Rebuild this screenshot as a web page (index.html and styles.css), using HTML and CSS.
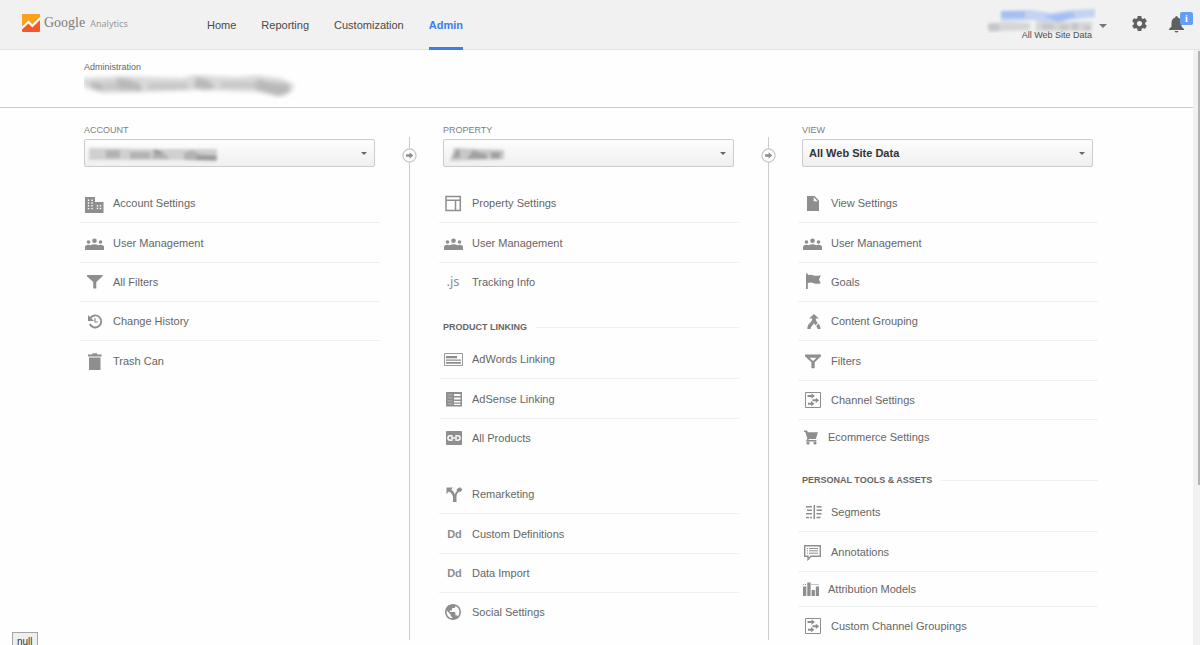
FILE: index.html
```html
<!DOCTYPE html>
<html lang="en">
<head>
    <meta charset="UTF-8">
    <meta name="viewport" content="width=device-width, initial-scale=1.0">
    <title>Google Analytics - Admin</title>
    <link rel="stylesheet" href="styles.css">
</head>
<body>
    <!-- Shared icons and filters -->
    <svg class="defs" width="0" height="0" aria-hidden="true">
        <defs>
            <filter id="soft" x="-10%" y="-40%" width="120%" height="180%">
                <feGaussianBlur stdDeviation="2"/>
            </filter>
            <filter id="softer" x="-10%" y="-40%" width="120%" height="180%">
                <feGaussianBlur stdDeviation="1.500"/>
            </filter>
            <symbol id="users" viewBox="0 0 20 20">
                <circle cx="4.500" cy="9" r="1.800"/><circle cx="10.500" cy="7.800" r="2.300"/><circle cx="16.500" cy="9" r="1.800"/>
                <path d="M1 17v-3q0-2 3.500-2.200q1.300 0 2.300.4q1.500-1 3.700-1t3.700 1q1-.4 2.300-.4q3.500.2 3.500 2.200v3z"/>
            </symbol>
            <symbol id="channels" viewBox="0 0 20 20">
                <path fill="none" stroke="#8e8e8e" d="M3.500 2.500h15v15h-15z"/>
                <path d="M5.500 5h4V3.300l3.400 2.700-3.400 2.700V7h-4zM10.500 9.300h3.300V7.700l3.400 2.600-3.400 2.600v-1.600h-3.300zM6 12.700h3v-1.600l3.400 2.600L9 16.300v-1.600H6z"/>
            </symbol>
        </defs>
    </svg>

    <header class="topbar">
        <a class="logo" href="#">
            <svg width="18" height="18" viewBox="0 0 18 18" aria-hidden="true">
                <rect width="18" height="18" rx="1" fill="#f4592b"/>
                <path fill="#fba11b" d="M1 0h16q1 0 1 1v3.500l-7.500 7-3-3L0 15V1q0-1 1-1z"/>
                <path fill="none" stroke="#fff" stroke-width="2.200" d="M-.5 14.500l7-6.500 3.800 4L18.500 4"/>
            </svg>
            <span class="logo-google">Google</span>
            <span class="logo-product">Analytics</span>
        </a>
        <nav class="tabs">
            <a href="#">Home</a>
            <a href="#">Reporting</a>
            <a href="#">Customization</a>
            <a class="active" href="#">Admin</a>
        </nav>
        <button class="profile" type="button">
            <svg class="profile-smudge" width="112" height="28" viewBox="0 0 112 28" aria-hidden="true">
                <g filter="url(#softer)">
                    <path fill="#c3d3f3" d="M17 6l30-1 20 3 20-3 24-1v8l-26 3-16 4-20-4-32 1z"/>
                    <path fill="#a5bff1" d="M17 6h24v7H17zM60 11l28-4 4 5-18 5z"/>
                    <path fill="#d6d6d6" d="M4 18l22-1 20 1v7l-28 1-12 2zM52 17h56v9H52z"/>
                    <path fill="#c6c6c6" d="M4 19h11v6H4zM58 19h12v5H58zM76 20h8v5h-8zM88 18h6v7h-6zM100 21h6v4h-6z"/>
                </g>
            </svg>
            <span>All Web Site Data</span>
        </button>
        <button class="icon-button" type="button" aria-label="Settings">
            <svg width="15" height="15" viewBox="2 2 20 20" aria-hidden="true">
                <path d="M19.430 12.980c.04-.32.07-.64.07-.98s-.03-.66-.07-.98l2.110-1.650c.19-.15.24-.42.12-.64l-2-3.460c-.12-.22-.39-.3-.61-.22l-2.490 1c-.52-.4-1.080-.73-1.690-.98l-.38-2.650C14.460 2.180 14.250 2 14 2h-4c-.25 0-.46.18-.49.42l-.38 2.650c-.61.25-1.170.59-1.690.98l-2.490-1c-.23-.09-.49 0-.61.22l-2 3.460c-.13.22-.07.49.12.64l2.110 1.650c-.04.32-.07.65-.07.98s.03.66.07.98l-2.110 1.650c-.19.15-.24.42-.12.64l2 3.460c.12.22.39.3.61.22l2.490-1c.52.4 1.080.73 1.690.98l.38 2.650c.03.24.24.42.49.42h4c.25 0 .46-.18.49-.42l.38-2.650c.61-.25 1.170-.59 1.690-.98l2.490 1c.23.09.49 0 .61-.22l2-3.460c.12-.22.07-.49-.12-.64l-2.110-1.650zM12 15.500c-1.930 0-3.500-1.570-3.500-3.500s1.570-3.500 3.500-3.500 3.500 1.570 3.500 3.500-1.570 3.500-3.500 3.500z"/>
            </svg>
        </button>
        <button class="icon-button bell" type="button" aria-label="Notifications">
            <svg width="15" height="18" viewBox="0 0 15 18" aria-hidden="true">
                <path d="M7.500 1q1.300 0 1.300 1.500Q12.500 3.500 12.500 8v3.500L15 14v1H0v-1l2.500-2.500V8q0-4.500 3.700-5.500Q6.200 1 7.500 1zM5.500 16h4q-.4 1.600-2 1.600t-2-1.600z"/>
            </svg>
            <span class="badge">i</span>
        </button>
    </header>

    <div class="page">
        <div class="content">
            <div class="page-title">
                <h1>Administration</h1>
                <svg width="220" height="26" viewBox="0 0 220 26" aria-hidden="true">
                    <g filter="url(#soft)">
                        <path fill="#dadada" d="M-2 5l40-2 60 2 12-3 44 2 18-2 24 3 14 6-1 7-12 6-24-5-60-2-50 2-44 1-20-6z"/>
                        <path fill="#b9b9b9" d="M6 9l12 1 2 8-12-2zM33 5l10 1 14 5 1 7-24-1-2-6zM112 4l12 3 8 7-10 3-12-2zM173 6l12 3 20 2v9l-12 3-22-7z"/>
                        <path fill="#c8c8c8" d="M20 9h14v8H20zM64 10h40v7H64zM136 9h36v6h-36z"/>
                    </g>
                </svg>
            </div>

            <main class="columns">
                <section class="column">
                    <label for="account">ACCOUNT</label>
                    <div class="picker">
                        <select id="account"><option></option></select>
                        <svg class="picker-smudge" width="136" height="20" viewBox="0 0 136 20" aria-hidden="true">
                            <g filter="url(#softer)">
                                <path fill="#d0d0d0" d="M3 4l60 1 68 0v11l-54 0-74 0z"/>
                                <path fill="#b2b2b2" d="M20 6h14v8H20zM44 8h20v7H44zM68 5l10 4 6 6H66zM98 9l8-3 8 4 17 1v6l-33-1z"/>
                                <path fill="#9a9a9a" d="M68 5l9 3-3 3-6-2zM110 12h20v4h-20z"/>
                            </g>
                        </svg>
                    </div>
                    <ul class="menu">
                        <li><a href="#">
                            <svg class="icon" viewBox="0 0 20 20" aria-hidden="true">
                                <path d="M1 4h10v5h8.500v11H1z"/>
                                <path stroke="#fefefe" stroke-width="1.400" stroke-dasharray="1.400 1.400" d="M4.500 6.500v11M8 6.500v11M13.500 12v5.600M16.500 12v5.600"/>
                            </svg>
                            Account Settings</a></li>
                        <li><a href="#"><svg class="icon" aria-hidden="true"><use href="#users"/></svg>User Management</a></li>
                        <li><a href="#">
                            <svg class="icon" viewBox="0 0 20 20" aria-hidden="true"><path d="M3 3h15.500v1.300L12.300 10v6.500H9.200V10L3 4.300z"/></svg>
                            All Filters</a></li>
                        <li><a href="#">
                            <svg class="icon" viewBox="0 0 20 20" aria-hidden="true">
                                <path fill="none" stroke="#8e8e8e" stroke-width="1.800" d="M6.200 7.200a6 6 0 1 1-.4 5.800"/>
                                <path d="M4 4v6h6z"/>
                                <path fill="none" stroke="#8e8e8e" stroke-width="1.200" d="M11 7v4h3"/>
                            </svg>
                            Change History</a></li>
                        <li><a href="#">
                            <svg class="icon" viewBox="0 0 20 20" aria-hidden="true"><path d="M4 3.500h4l.8-1.200h4l.8 1.200h4v2H4zM5 6.500h11.500V19H5z"/></svg>
                            Trash Can</a></li>
                    </ul>
                </section>

                <div class="divider">
                    <svg width="15" height="15" viewBox="0 0 16 16" aria-hidden="true">
                        <circle cx="8" cy="8" r="7" fill="#fefefe" stroke="#c6c6c6" stroke-width="1.300"/>
                        <path fill="#8e8e8e" d="M4.300 6.600h3.800V4.600L12 8l-3.900 3.400v-2H4.300z"/>
                    </svg>
                </div>

                <section class="column">
                    <label for="property">PROPERTY</label>
                    <div class="picker">
                        <select id="property"><option></option></select>
                        <svg class="picker-smudge" width="64" height="20" viewBox="0 0 64 20" aria-hidden="true">
                            <g filter="url(#softer)">
                                <path fill="#c8c8c8" d="M9 4l24 1 26 1v9l-30 1-24 1 2-6z"/>
                                <path fill="#a2a2a2" d="M11 6h4l0 8H8zM28 6l8 3 6 1v5H22zM46 8h9v7h-9z"/>
                            </g>
                        </svg>
                    </div>
                    <ul class="menu">
                        <li><a href="#">
                            <svg class="icon" viewBox="0 0 20 20" aria-hidden="true"><path fill="none" stroke="#8e8e8e" stroke-width="1.500" d="M3 3.500h14.300v14H3zM3 7.300h14.300M12.500 7.300v10.200"/></svg>
                            Property Settings</a></li>
                        <li><a href="#"><svg class="icon" aria-hidden="true"><use href="#users"/></svg>User Management</a></li>
                        <li><a href="#"><span class="icon icon-js" aria-hidden="true">.js</span>Tracking Info</a></li>
                    </ul>
                    <h2>PRODUCT LINKING</h2>
                    <ul class="menu">
                        <li><a href="#">
                            <svg class="icon" viewBox="0 0 20 20" aria-hidden="true">
                                <path fill="none" stroke="#9a9a9a" d="M1.500 4.500h18v12h-18z"/>
                                <path d="M3 7h11v2.200H3zM3 10.500h15v1.200H3zM3 13h15v1.700H3z"/>
                            </svg>
                            AdWords Linking</a></li>
                        <li><a href="#">
                            <svg class="icon" viewBox="0 0 20 20" aria-hidden="true">
                                <path d="M3 3h16v14.500H3z"/>
                                <path fill="#fefefe" d="M11 5h6.500v2H11zM11 8.500h6.500v2H11zM11 12h6.500v1.500H11zM11 14.700h6.500V16H11z"/>
                                <path fill="#c4c4c4" d="M4.500 5.500h4.800v.7H4.500zM4.500 8.500h4.800v.7H4.500zM4.500 11.500h4.800v.7H4.500zM4.500 14.500h4.800v.7H4.500z"/>
                            </svg>
                            AdSense Linking</a></li>
                        <li><a href="#">
                            <svg class="icon" viewBox="0 0 20 20" aria-hidden="true">
                                <rect x="3" y="3" width="16" height="14" rx="1"/>
                                <path fill="none" stroke="#fefefe" stroke-width="1.500" d="M9.800 8.400Q9 7.800 7.500 7.800q-2.600 0-2.600 2.200t2.600 2.200q1.500 0 2.300-.6M12.200 8.400q.8-.6 2.300-.6 2.600 0 2.600 2.200t-2.600 2.200q-1.500 0-2.300-.6M8 10h6"/>
                            </svg>
                            All Products</a></li>
                    </ul>
                    <ul class="menu menu-spaced">
                        <li><a href="#">
                            <svg class="icon" viewBox="0 0 20 20" aria-hidden="true">
                                <path d="M3.500 3.500H10L8.300 5.400q3 2.300 3.500 5 .5-2 2.400-3.700l-.9-.9L16 3.500h1.500l2 2.200-2.500 2.500-1-.7q-2.500 2-2.500 5V18H10v-4.500q0-3.500-4-6L3.500 10z"/>
                            </svg>
                            Remarketing</a></li>
                        <li><a href="#"><span class="icon icon-dd" aria-hidden="true">Dd</span>Custom Definitions</a></li>
                        <li><a href="#"><span class="icon icon-dd" aria-hidden="true">Dd</span>Data Import</a></li>
                        <li><a href="#">
                            <svg class="icon" viewBox="0 0 25 25" aria-hidden="true"><path transform="translate(.5 .5)" d="M12 2C6.480 2 2 6.480 2 12s4.480 10 10 10 10-4.480 10-10S17.520 2 12 2zm-1 17.930c-3.950-.49-7-3.850-7-7.930 0-.62.08-1.210.21-1.790L9 15v1c0 1.100.9 2 2 2v1.930zm6.900-2.540c-.26-.81-1-1.390-1.900-1.390h-1v-3c0-.55-.45-1-1-1H8v-2h2c.55 0 1-.45 1-1V7h2c1.100 0 2-.9 2-2v-.41c2.930 1.190 5 4.060 5 7.410 0 2.080-.8 3.970-2.100 5.390z"/></svg>
                            Social Settings</a></li>
                    </ul>
                </section>

                <div class="divider">
                    <svg width="15" height="15" viewBox="0 0 16 16" aria-hidden="true">
                        <circle cx="8" cy="8" r="7" fill="#fefefe" stroke="#c6c6c6" stroke-width="1.300"/>
                        <path fill="#8e8e8e" d="M4.300 6.600h3.800V4.600L12 8l-3.900 3.400v-2H4.300z"/>
                    </svg>
                </div>

                <section class="column">
                    <label for="view">VIEW</label>
                    <div class="picker">
                        <select id="view"><option>All Web Site Data</option></select>
                    </div>
                    <ul class="menu">
                        <li><a href="#">
                            <svg class="icon" viewBox="0 0 20 20" aria-hidden="true">
                                <path d="M5 3h7.500L17 7.500V18H5z"/>
                                <path fill="#fefefe" d="M11.700 4.300v4h4z"/>
                            </svg>
                            View Settings</a></li>
                        <li><a href="#"><svg class="icon" aria-hidden="true"><use href="#users"/></svg>User Management</a></li>
                        <li><a href="#">
                            <svg class="icon" viewBox="0 0 20 20" aria-hidden="true"><path d="M4 1.500h1.800V3q3-.8 6 .5 3 .8 7-.3l-1.800 4.500 1.800 3.500q-4 1-7 0-3-1.200-6-.2v6H4z"/></svg>
                            Goals</a></li>
                        <li><a href="#">
                            <svg class="icon" viewBox="0 0 20 20" aria-hidden="true">
                                <path d="M12 3l4.800 4.500h-3.200q.2 2.500 2.200 4.500l-2.300 2.300q-1-1-1.500-2.200-.5 1.200-1.500 2.200-2 1.500-2 3.700H5.300q0-4.200 2.700-6 2.200-2 2.400-4.500H7.200zM16.500 12.800q2 2 2.200 5.200h-3.200q-.2-1.700-1.300-3z"/>
                            </svg>
                            Content Grouping</a></li>
                        <li><a href="#">
                            <svg class="icon" viewBox="0 0 20 20" aria-hidden="true"><path fill-rule="evenodd" d="M3 3.500h16v1.800l-6.300 6v6H9.400v-6L3 5.300zM7.500 6.700l3.500 3.200 3.500-3.200z"/></svg>
                            Filters</a></li>
                        <li><a href="#"><svg class="icon" aria-hidden="true"><use href="#channels"/></svg>Channel Settings</a></li>
                        <li class="compact"><a href="#">
                            <svg class="icon" viewBox="0 0 17 20" aria-hidden="true">
                                <path d="M2 3.500h3l.9 1.800H16L13.800 12H7l-.6 1h8v1.400H4l1.300-3L3.300 5H2z"/>
                                <circle cx="6" cy="16" r="1.600"/><circle cx="13" cy="16" r="1.600"/>
                            </svg>
                            Ecommerce Settings</a></li>
                    </ul>
                    <h2>PERSONAL TOOLS &amp; ASSETS</h2>
                    <ul class="menu">
                        <li><a href="#">
                            <svg class="icon" viewBox="0 0 20 20" aria-hidden="true">
                                <path fill="none" stroke="#8e8e8e" stroke-width="1.500" d="M4 4.700h6M5 8.200h5M4 11.700h6M4 15.500h3M8 15.500h2M12.300 3v14M14.500 4.700h5M14.500 8.200h6M14.500 11.700h5M14.500 15.500h4"/>
                            </svg>
                            Segments</a></li>
                        <li><a href="#">
                            <svg class="icon" viewBox="0 0 20 20" aria-hidden="true">
                                <path fill="none" stroke="#8e8e8e" stroke-width="1.400" d="M2.700 3.700h15.600v10.600H9L6 17.500v-3.200H2.700z"/>
                                <path fill="none" stroke="#8e8e8e" d="M5 6.500h1M7 6.500h9M5 8.800h1M7 8.800h9M5 11.200h1M7 11.200h9"/>
                            </svg>
                            Annotations</a></li>
                        <li class="compact"><a href="#">
                            <svg class="icon" viewBox="0 0 17 20" aria-hidden="true">
                                <path d="M1 7.500h3.300V17H1zM5.300 3.500h3.300V17H5.300zM9.600 11h3.300v6H9.600zM13.800 7.500H17V17h-3.200z"/>
                                <path stroke="#8e8e8e" stroke-dasharray="1 1" d="M1 5.500h4M9.500 5.500H17"/>
                            </svg>
                            Attribution Models</a></li>
                        <li><a href="#"><svg class="icon" aria-hidden="true"><use href="#channels"/></svg>Custom Channel Groupings</a></li>
                    </ul>
                </section>
            </main>
        </div>
        <div class="scrollbar"><div class="thumb"></div></div>
    </div>

    <div class="status">null</div>
</body>
</html>
```
FILE: styles.css
```css
* {
    box-sizing: border-box;
}
body {
    margin: 0;
    height: 100vh;
    overflow: hidden;
    display: flex;
    flex-direction: column;
    background-color: #fefefe;
    color: #666;
    font-family: "Liberation Sans", Arial, sans-serif;
    font-size: 11px;
}
a {
    color: inherit;
    text-decoration: none;
}
button {
    padding: 0;
    border: none;
    background: none;
    font: inherit;
    color: inherit;
    cursor: pointer;
}
.defs {
    position: absolute;
}

/* Top bar */
.topbar {
    display: flex;
    align-items: center;
    flex-shrink: 0;
    height: 50px;
    padding: 0 16px 0 22px;
    background-color: #f1f1f1;
    box-shadow: inset 0 -1px #e3e3e3;
    color: #4a4a4a;
}
.logo {
    display: flex;
    align-items: center;
    width: 109px;
    height: 18px;
    margin-bottom: 4px;
    color: #7c7c7c;
}
.logo-google {
    margin: 0 5px 0 4px;
    font-family: "Liberation Serif", "Times New Roman", serif;
    font-size: 14px;
}
.logo-product {
    color: #999;
    font-family: "Noto Sans", sans-serif;
    font-size: 9px;
}
.tabs {
    display: flex;
    gap: 25px;
    margin-left: 76px;
}
.tabs a {
    line-height: 50px;
}
.tabs .active {
    color: #3b7ded;
    font-weight: bold;
    box-shadow: inset 0 -3px #3b7ded;
}
.profile {
    position: relative;
    height: 50px;
    margin-left: auto;
    padding: 20px 15px 0 36px;
    font-size: 9px;
}
.profile::after,
.picker::after {
    content: "";
    position: absolute;
    border: 4px solid transparent;
    border-top-color: #777;
    border-bottom: none;
}
.profile::after {
    right: 0;
    top: 24px;
}
.profile-smudge {
    position: absolute;
    right: 11px;
    top: 5px;
}
.icon-button {
    position: relative;
    display: flex;
    margin: 0 0 3px 25px;
    fill: #606060;
}
.bell {
    margin: 0 0 2px 22px;
}
.badge {
    position: absolute;
    left: 11px;
    top: -3px;
    width: 13px;
    border-radius: 2px;
    background-color: #669df6;
    color: #fff;
    font-family: "Liberation Serif", serif;
    font-size: 10px;
    font-weight: bold;
    line-height: 13px;
    text-align: center;
}

/* Page */
.page {
    display: flex;
    flex: 1;
    min-height: 0;
}
.content {
    flex: 1;
}
.scrollbar {
    width: 7px;
    padding: 1px 0 0 5px;
    background-color: #f1f1f1;
}
.thumb {
    height: 73%;
    background-color: #b4b4b4;
}
.page-title {
    height: 58px;
    padding: 11px 84px 0;
    border-bottom: 1px solid #ccc;
}
.page-title svg {
    display: block;
}
h1 {
    margin: 0;
    font-size: 9px;
    font-weight: normal;
    line-height: 12px;
}

/* Columns */
.columns {
    display: flex;
    padding: 16px 95px 0 80px;
}
.column {
    flex: 1;
}
.column label {
    display: block;
    margin: 0 0 3px 4px;
    color: #808080;
    font-size: 9px;
    line-height: 12px;
}
.picker {
    position: relative;
    margin: 0 5px 17px 4px;
}
.picker::after {
    right: 8px;
    top: 13px;
    border-width: 3px;
    border-bottom: none;
    border-top-color: #666;
}
.picker select {
    display: block;
    width: 100%;
    height: 28px;
    padding: 0 24px 0 6px;
    appearance: none;
    border: 1px solid #ccc;
    border-radius: 2px;
    background: linear-gradient(#fdfdfd, #f0f0f0);
    color: #333;
    font: bold 11px "Liberation Sans", Arial, sans-serif;
}
.picker-smudge {
    position: absolute;
    left: 2px;
    top: 5px;
    pointer-events: none;
}
.divider {
    position: relative;
    width: 59px;
    margin: 13px 0 6px;
    background: linear-gradient(#ccc, #ccc) center / 1px 100% no-repeat;
}
.divider svg {
    position: absolute;
    left: 22px;
    top: 11px;
}

/* Menus */
.menu {
    margin: 0;
    padding: 0;
    list-style: none;
}
.menu-spaced {
    margin-top: 17px;
}
.menu li {
    height: 39px;
    border-bottom: 1px solid #efefef;
}
.menu li:nth-child(3n+2) {
    height: 40px;
}
.menu li:last-child {
    border-bottom-color: transparent;
}
.menu a {
    display: flex;
    align-items: center;
    gap: 9px;
    height: 100%;
    padding-left: 4px;
}
.menu .compact {
    height: 35px;
}
.compact .icon {
    width: 17px;
}
.icon {
    flex-shrink: 0;
    width: 20px;
    height: 20px;
    fill: #8e8e8e;
    color: #8e8e8e;
    line-height: 20px;
    text-align: center;
}
.icon-js {
    font-family: "Noto Sans", sans-serif;
    font-size: 13px;
    line-height: 18px;
}
.icon-dd {
    padding-left: 3px;
    font-weight: bold;
}
h2 {
    display: flex;
    align-items: center;
    gap: 9px;
    margin: 0;
    padding: 19px 0 7px 4px;
    font-size: 9px;
    line-height: 12px;
}
h2::after {
    content: "";
    flex: 1;
    height: 1px;
    background-color: #efefef;
}

/* Link status shown in the bottom corner */
.status {
    position: fixed;
    left: 12px;
    bottom: -7px;
    padding: 0 4px;
    border: 1px solid #a5a5a5;
    background-color: #efefef;
    color: #333;
    font-size: 10px;
    line-height: 18px;
}
```
